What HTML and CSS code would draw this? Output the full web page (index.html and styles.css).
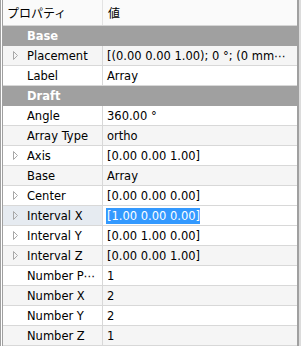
FILE: index.html
```html
<!DOCTYPE html>
<html lang="ja">
<head>
    <meta charset="UTF-8">
    <title>プロパティ</title>
    <link rel="stylesheet" href="styles.css">
</head>
<body>
    <div class="frame">
        <div class="tree">
            <div class="header">
                <div class="hcell name">プロパティ</div>
                <div class="hcell">値</div>
            </div>

            <div class="group">Base</div>
            <div class="row alt">
                <div class="cell name"><span class="branch"><svg width="6" height="9" viewBox="0 0 6 9"><path d="M0.5 0.5 L4.5 4.5 L0.5 8.5 Z" fill="none" stroke="#a8a8a8"/></svg></span>Placement</div>
                <div class="cell value">[(0.00 0.00 1.00); 0 °; (0 mm⋯</div>
            </div>
            <div class="row">
                <div class="cell name"><span class="branch"></span>Label</div>
                <div class="cell value">Array</div>
            </div>

            <div class="group">Draft</div>
            <div class="row">
                <div class="cell name"><span class="branch"></span>Angle</div>
                <div class="cell value">360.00 °</div>
            </div>
            <div class="row alt">
                <div class="cell name"><span class="branch"></span>Array Type</div>
                <div class="cell value">ortho</div>
            </div>
            <div class="row">
                <div class="cell name"><span class="branch"><svg width="6" height="9" viewBox="0 0 6 9"><path d="M0.5 0.5 L4.5 4.5 L0.5 8.5 Z" fill="none" stroke="#a8a8a8"/></svg></span>Axis</div>
                <div class="cell value">[0.00 0.00 1.00]</div>
            </div>
            <div class="row alt">
                <div class="cell name"><span class="branch"></span>Base</div>
                <div class="cell value">Array</div>
            </div>
            <div class="row">
                <div class="cell name"><span class="branch"><svg width="6" height="9" viewBox="0 0 6 9"><path d="M0.5 0.5 L4.5 4.5 L0.5 8.5 Z" fill="none" stroke="#a8a8a8"/></svg></span>Center</div>
                <div class="cell value">[0.00 0.00 0.00]</div>
            </div>
            <div class="row current">
                <div class="cell name"><span class="branch"><svg width="6" height="9" viewBox="0 0 6 9"><path d="M0.5 0.5 L4.5 4.5 L0.5 8.5 Z" fill="none" stroke="#a8a8a8"/></svg></span>Interval X</div>
                <div class="cell value editor"><span class="selected">[1.00 0.00 0.00]</span></div>
            </div>
            <div class="row">
                <div class="cell name"><span class="branch"><svg width="6" height="9" viewBox="0 0 6 9"><path d="M0.5 0.5 L4.5 4.5 L0.5 8.5 Z" fill="none" stroke="#a8a8a8"/></svg></span>Interval Y</div>
                <div class="cell value">[0.00 1.00 0.00]</div>
            </div>
            <div class="row alt">
                <div class="cell name"><span class="branch"><svg width="6" height="9" viewBox="0 0 6 9"><path d="M0.5 0.5 L4.5 4.5 L0.5 8.5 Z" fill="none" stroke="#a8a8a8"/></svg></span>Interval Z</div>
                <div class="cell value">[0.00 0.00 1.00]</div>
            </div>
            <div class="row">
                <div class="cell name"><span class="branch"></span>Number P⋯</div>
                <div class="cell value">1</div>
            </div>
            <div class="row alt">
                <div class="cell name"><span class="branch"></span>Number X</div>
                <div class="cell value">2</div>
            </div>
            <div class="row">
                <div class="cell name"><span class="branch"></span>Number Y</div>
                <div class="cell value">2</div>
            </div>
            <div class="row alt">
                <div class="cell name"><span class="branch"></span>Number Z</div>
                <div class="cell value">1</div>
            </div>
        </div>
    </div>
</body>
</html>
```

FILE: styles.css
```css
html, body {
    margin: 0;
    padding: 0;
    background: #ffffff;
    overflow: hidden;
}
body {
    font-family: "DejaVu Sans", "Noto Sans CJK JP", sans-serif;
    font-size: 11.5px;
    color: #000000;
}
.frame {
    width: 301px;
    height: 346px;
    box-sizing: border-box;
    border-left: 1px solid #a0a0a0;
    border-right: 2px solid #dcdcdc;
    padding-left: 1px;
    background: #ffffff;
}
.tree {
    height: 100%;
    border-left: 1px solid #a0a0a0;
    border-right: 2px solid #a0a0a0;
    background: #ffffff;
}
.header {
    display: grid;
    grid-template-columns: 100px 1fr;
    height: 25px;
    background: #fafafa;
    border-bottom: 1px solid #d5d5d5;
}
.hcell {
    display: flex;
    align-items: center;
    padding-left: 5px;
    font-family: "Noto Sans CJK JP", sans-serif;
    font-size: 12px;
}
.hcell.name {
    padding-left: 4px;
    border-right: 1px solid #e3e3e3;
}
.group {
    height: 20px;
    line-height: 20px;
    padding-left: 24px;
    background: #a0a0a0;
    color: #ffffff;
    font-weight: bold;
}
.row {
    display: grid;
    grid-template-columns: 100px 1fr;
    height: 19px;
    border-bottom: 1px solid #d8d8d8;
    background: #ffffff;
}
.row.alt {
    background: #f5f5f5;
}
.cell {
    display: flex;
    align-items: center;
    white-space: nowrap;
    overflow: hidden;
}
.cell.name {
    border-right: 1px solid #d8d8d8;
}
.branch {
    display: flex;
    align-items: center;
    width: 24px;
    flex: none;
}
.branch svg {
    margin-left: 10px;
}
.cell.value {
    padding-left: 4px;
}
.row.current {
    background: #f5f5f5;
}
.row.current .cell.name {
    background: #e6ebf1;
}
.editor {
    background: #ffffff;
}
.selected {
    background: #3399ff;
    color: #ffffff;
    line-height: 16px;
    padding-left: 1px;
    margin-left: -1px;
}
```
